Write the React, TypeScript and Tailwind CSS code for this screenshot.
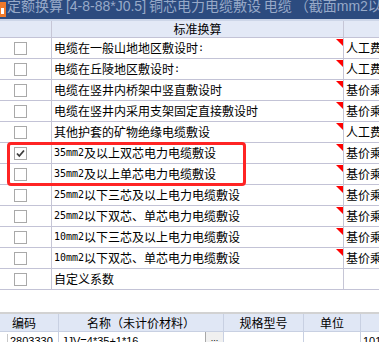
import React from "react";

type Row = { label: string; value: string; checked?: boolean; tri?: boolean };

const rows: Row[] = [
  { label: "电缆在一般山地地区敷设时:", value: "人工费*1.3", tri: true },
  { label: "电缆在丘陵地区敷设时:", value: "人工费*1.15", tri: true },
  { label: "电缆在竖井内桥架中竖直敷设时", value: "基价乘1.3", tri: true },
  { label: "电缆在竖井内采用支架固定直接敷设时", value: "基价乘1.6", tri: true },
  { label: "其他护套的矿物绝缘电缆敷设", value: "人工费*1.4", tri: true },
  { label: "35mm2及以上双芯电力电缆敷设", value: "基价乘0.5", tri: true, checked: true },
  { label: "35mm2及以上单芯电力电缆敷设", value: "基价乘0.5", tri: true },
  { label: "25mm2以下三芯及以上电力电缆敷设", value: "基价乘0.8", tri: true },
  { label: "25mm2以下双芯、单芯电力电缆敷设", value: "基价乘0.7", tri: true },
  { label: "10mm2以下三芯及以上电力电缆敷设", value: "基价乘0.6", tri: true },
  { label: "10mm2以下双芯、单芯电力电缆敷设", value: "基价乘0.5", tri: true },
  { label: "自定义系数", value: "" },
];

function Mixed({ text }: { text: string }) {
  const parts = text.split(/([\x21-\x7e]+)/).filter((p) => p.length > 0);
  return (
    <>
      {parts.map((p, i) =>
        /^[\x21-\x7e]+$/.test(p) ? (
          <span key={i} className="[font-family:'DejaVu_Sans_Mono',monospace] text-[10px]">
            {p}
          </span>
        ) : (
          <span key={i}>{p}</span>
        )
      )}
    </>
  );
}

function Checkbox({ checked }: { checked?: boolean }) {
  return (
    <div className="w-[13px] h-[13px] border border-[#a9a9a9] bg-white flex items-center justify-center">
      {checked && (
        <svg width="11" height="11" viewBox="0 0 11 11">
          <path d="M2 5.5 L4.3 8 L9 2.5" fill="none" stroke="#3c3c3c" strokeWidth="1.8" />
        </svg>
      )}
    </div>
  );
}

function Triangle() {
  return (
    <svg className="absolute right-0 top-[1px]" width="7" height="7" viewBox="0 0 7 7">
      <polygon points="0,0 7,0 7,7" fill="#ff0000" />
    </svg>
  );
}

export default function App() {
  return (
    <div className="w-[379px] h-[342px] overflow-hidden bg-white relative flex flex-col [font-family:'Noto_Sans_CJK_SC',sans-serif] text-[12px] text-black">
      {/* Title bar */}
      <div className="h-[19px] shrink-0 bg-[#2c4b7f] flex items-start overflow-hidden">
        <div className="w-[6px] h-[15px] mt-[2px] bg-[#ee7a2c] flex items-center justify-start shrink-0">
          <div className="w-[3px] h-[6px] bg-white ml-[1px] mt-[3px]" />
        </div>
        <div className="ml-[1px] mt-[-3px] whitespace-nowrap text-[14px] leading-[18px] text-[#97a9c8] [font-family:'Liberation_Sans','Noto_Sans_CJK_SC',sans-serif] [word-spacing:-1px]">
          定额换算 [4-8-88*J0.5] 铜芯电力电缆敷设 电缆 （截面mm2以内）
        </div>
      </div>
      <div className="h-[2px] shrink-0 bg-[#cdd6e8]" />
      {/* Header */}
      <div className="h-[17px] shrink-0 flex bg-[#e3e9f6] border-b border-[#c3c3d6]">
        <div className="w-[52px] shrink-0 border-r border-[#c6c6d6]" />
        <div className="w-[292px] shrink-0 border-r border-[#c6c6d6] flex items-center justify-center leading-[16px]">
          标准换算
        </div>
        <div className="flex-1" />
      </div>
      {/* Rows */}
      {rows.map((r, i) => (
        <div key={i} className="h-[21px] shrink-0 flex border-b border-[#c3c3d6] bg-white">
          <div className="w-[52px] shrink-0 border-r border-[#c6c6d6] flex items-center pl-[14px]">
            <Checkbox checked={r.checked} />
          </div>
          <div className="relative w-[292px] shrink-0 border-r border-[#c6c6d6] flex items-center pl-[2px] whitespace-nowrap leading-[20px]">
            <Mixed text={r.label} />
            {r.tri && <Triangle />}
          </div>
          <div className="flex-1 flex items-center pl-[2px] whitespace-nowrap overflow-hidden leading-[20px]">
            {r.value}
          </div>
        </div>
      ))}
      {/* Gap */}
      <div className="h-[22px] shrink-0 bg-white" />
      <div className="h-[2px] shrink-0 bg-[#d2d2d2]" />
      {/* Bottom table header */}
      <div className="h-[18px] shrink-0 flex bg-[#e0e7f5] border-b border-[#c8d0e2] leading-[17px]">
        <div className="w-[59px] shrink-0 border-r border-[#c8d0e2] pl-[12px]">编码</div>
        <div className="w-[165px] shrink-0 border-r border-[#c8d0e2] text-center">名称（未计价材料）</div>
        <div className="w-[80px] shrink-0 border-r border-[#c8d0e2] text-center">规格型号</div>
        <div className="w-[57px] shrink-0 border-r border-[#c8d0e2] text-center">单位</div>
        <div className="flex-1" />
      </div>
      {/* Bottom row */}
      <div className="flex-1 flex bg-white text-[11px] [font-family:'Liberation_Sans','Noto_Sans_CJK_SC',sans-serif] leading-[14px] overflow-hidden">
        <div className="w-[59px] shrink-0 border-r border-[#c8d0e2] flex items-start">
          <div className="w-[8px] h-[12px] mt-[2px] border-r border-[#c8c8c8] flex items-end justify-center text-[8px] leading-[8px] text-[#555]">
            ...
          </div>
          <div className="pl-[2px] pt-[2px]">2803330</div>
        </div>
        <div className="w-[165px] shrink-0 border-r border-[#c8d0e2] flex">
          <div className="flex-1 pl-[3px] pt-[2px]">JJV=4*35+1*16</div>
          <div className="w-[18px] border-l border-[#a8a8a8] bg-[#f0f0f0] flex items-end justify-center text-[9px] leading-[8px]">
            ...
          </div>
        </div>
        <div className="w-[80px] shrink-0 border-r border-[#c8d0e2]" />
        <div className="w-[57px] shrink-0 border-r border-[#c8d0e2] pl-[3px] pt-[2px]">-</div>
        <div className="flex-1 pl-[2px] pt-[2px] whitespace-nowrap">101.5</div>
      </div>

      {/* Red highlight box */}
      <div className="absolute left-[7px] top-[142px] w-[239px] h-[44px] border-[3px] border-[#ff2424] rounded-[4px] pointer-events-none" />
    </div>
  );
}
